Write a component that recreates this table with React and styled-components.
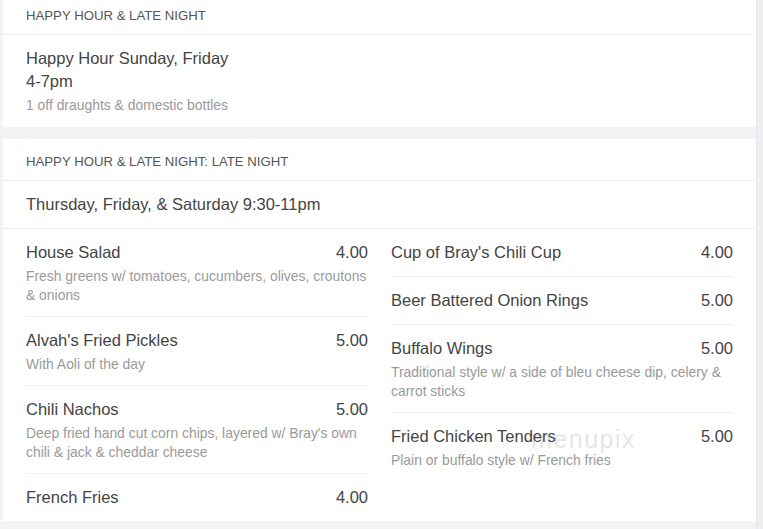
import React from "react";
import styled, { createGlobalStyle } from "styled-components";

const GlobalStyle = createGlobalStyle`
  html, body {
    margin: 0;
    padding: 0;
    background: #f3f3f5;
    font-family: "Liberation Sans", Arial, sans-serif;
    overflow: hidden;
  }
`;

const leftItems = [
  {
    name: "House Salad",
    price: "4.00",
    text: "Fresh greens w/ tomatoes, cucumbers, olives, croutons & onions",
  },
  { name: "Alvah's Fried Pickles", price: "5.00", text: "With Aoli of the day" },
  {
    name: "Chili Nachos",
    price: "5.00",
    text: "Deep fried hand cut corn chips, layered w/ Bray's own chili & jack & cheddar cheese",
  },
  { name: "French Fries", price: "4.00" },
];

const rightItems = [
  { name: "Cup of Bray's Chili Cup", price: "4.00" },
  { name: "Beer Battered Onion Rings", price: "5.00" },
  {
    name: "Buffalo Wings",
    price: "5.00",
    text: "Traditional style w/ a side of bleu cheese dip, celery & carrot sticks",
  },
  {
    name: "Fried Chicken Tenders",
    price: "5.00",
    text: "Plain or buffalo style w/ French fries",
  },
];

const Column = ({ items }) => (
  <ItemList>
    {items.map(({ name, price, text }, i) => (
      <Item key={i}>
        <ItemHead>
          <span>{name}</span>
          <span>{price}</span>
        </ItemHead>
        {text && <Desc>{text}</Desc>}
      </Item>
    ))}
  </ItemList>
);

const App = () => {
  return (
    <Page>
      <GlobalStyle />
      <Main>
        <Card>
          <Header>HAPPY HOUR &amp; LATE NIGHT</Header>
          <Intro>
            <Title>
              Happy Hour Sunday, Friday
              <br />
              4-7pm
            </Title>
            <Desc>1 off draughts &amp; domestic bottles</Desc>
          </Intro>
        </Card>
        <Card>
          <Header>HAPPY HOUR &amp; LATE NIGHT: LATE NIGHT</Header>
          <Intro bordered>
            <Title>Thursday, Friday, &amp; Saturday 9:30-11pm</Title>
          </Intro>
          <Columns>
            <Column items={leftItems} />
            <Column items={rightItems} />
            <Watermark>menupix</Watermark>
          </Columns>
        </Card>
      </Main>
      <Track />
    </Page>
  );
};

export default App;

const Page = styled.div`
  display: flex;
  width: 763px;
  height: 529px;
  overflow: hidden;
`;

const Main = styled.div`
  flex: 1;
  display: flex;
  flex-direction: column;
  gap: 12px;
  padding-left: 3px;
  margin-top: -7px;
`;

const Track = styled.div`
  width: 7px;
  background: #efeff3;
  border-left: 1px solid #e6e6ea;
`;

const Card = styled.div`
  background: #fff;
  width: 753px;
`;

const Header = styled.div`
  padding: 14px 23px 9px;
  font-size: 13.2px;
  line-height: 18px;
  color: #555;
  border-bottom: 1px solid #eee;
`;

const Intro = styled.div`
  padding: 12px 23px ${(p) => (p.bordered ? "12px" : "13px")};
  border-bottom: ${(p) => (p.bordered ? "1px solid #eee" : "none")};
`;

const Title = styled.div`
  font-size: 16.5px;
  line-height: 23px;
  color: #444;
`;

const Columns = styled.div`
  position: relative;
  display: grid;
  grid-template-columns: 342px 342px;
  column-gap: 23px;
  padding: 0 23px;
`;

const ItemList = styled.div`
  display: flex;
  flex-direction: column;
`;

const Item = styled.div`
  padding: 12px 0;
  border-bottom: 1px solid #eee;
  &:last-child {
    border-bottom: none;
  }
`;

const ItemHead = styled.div`
  display: flex;
  justify-content: space-between;
  font-size: 16.5px;
  line-height: 23px;
  color: #444;
`;

const Desc = styled.div`
  margin: 3px 0 -1px;
  font-size: 13.9px;
  line-height: 19px;
  color: #9a9a9a;
`;

const Watermark = styled.div`
  position: absolute;
  left: 528px;
  top: 196px;
  font-size: 25px;
  font-weight: 300;
  color: rgba(120, 120, 120, 0.2);
  letter-spacing: 1.5px;
  pointer-events: none;
`;
